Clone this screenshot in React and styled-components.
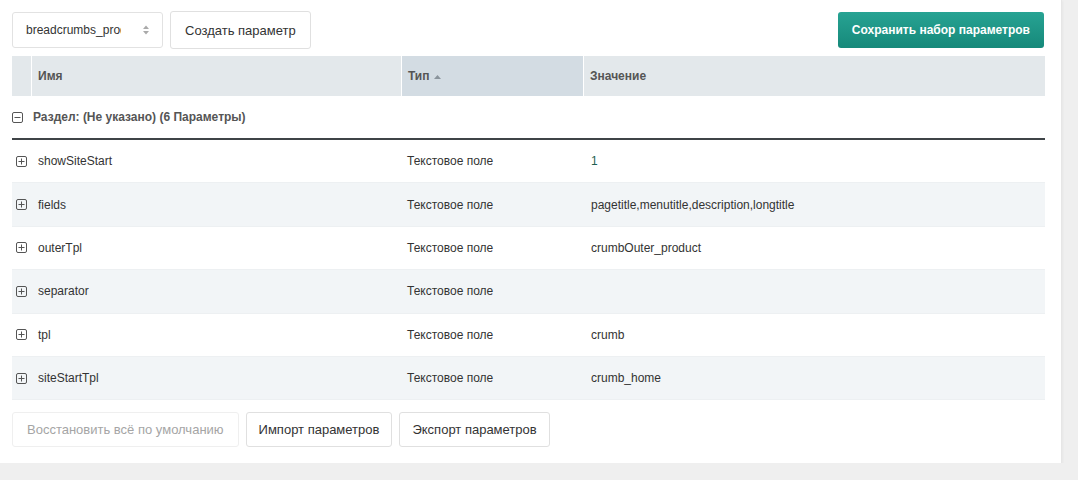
import React from "react";
import styled, { createGlobalStyle } from "styled-components";

const GlobalStyle = createGlobalStyle`
  html, body {
    margin: 0;
    padding: 0;
    background: #efefef;
    font-family: "Liberation Sans", Arial, sans-serif;
  }
`;

const params = [
  { name: "showSiteStart", type: "Текстовое поле", value: "1", numeric: true },
  { name: "fields", type: "Текстовое поле", value: "pagetitle,menutitle,description,longtitle" },
  { name: "outerTpl", type: "Текстовое поле", value: "crumbOuter_product" },
  { name: "separator", type: "Текстовое поле", value: "" },
  { name: "tpl", type: "Текстовое поле", value: "crumb" },
  { name: "siteStartTpl", type: "Текстовое поле", value: "crumb_home" },
];

const BoxIcon = ({ plus }) => (
  <svg width="11" height="11" viewBox="0 0 11 11">
    <rect x="0.5" y="0.5" width="10" height="10" rx="1.5" fill="none" stroke="#555" />
    <line x1="2.5" y1="5.5" x2="8.5" y2="5.5" stroke="#555" />
    {plus && <line x1="5.5" y1="2.5" x2="5.5" y2="8.5" stroke="#555" />}
  </svg>
);

export default function App() {
  return (
    <>
      <GlobalStyle />
      <Panel>
        <Toolbar>
          <Select>
            <SelectText>breadcrumbs_product</SelectText>
            <SelectArrows>
              <svg width="8" height="12" viewBox="0 0 8 12">
                <path d="M1 5 L4 1.5 L7 5 Z" fill="#aaa" />
                <path d="M1 7 L4 10.5 L7 7 Z" fill="#aaa" />
              </svg>
            </SelectArrows>
          </Select>
          <Button $tall>Создать параметр</Button>
          <Spacer />
          <SaveButton>Сохранить набор параметров</SaveButton>
        </Toolbar>

        <Table>
          <HeadRow>
            <HeadCell />
            <HeadCell>Имя</HeadCell>
            <HeadCell $sorted>
              Тип
              <SortArrow>
                <svg width="7" height="4" viewBox="0 0 7 4">
                  <path d="M0 4 L3.5 0 L7 4 Z" fill="#8a949c" />
                </svg>
              </SortArrow>
            </HeadCell>
            <HeadCell>Значение</HeadCell>
          </HeadRow>

          <GroupRow>
            <BoxIcon />
            <GroupTitle>Раздел: (Не указано) (6 Параметры)</GroupTitle>
          </GroupRow>

          {params.map((p, i) => (
            <Row key={p.name} $alt={i % 2 === 1}>
              <ExpandCell>
                <BoxIcon plus />
              </ExpandCell>
              <Cell>{p.name}</Cell>
              <Cell>{p.type}</Cell>
              <Cell $numeric={p.numeric}>{p.value}</Cell>
            </Row>
          ))}
        </Table>

        <Footer>
          <Button disabled>Восстановить всё по умолчанию</Button>
          <Button>Импорт параметров</Button>
          <Button>Экспорт параметров</Button>
        </Footer>
      </Panel>
    </>
  );
}

const Panel = styled.div`
  width: 1062px;
  box-sizing: border-box;
  background: #fff;
  padding: 11px 17px 16px 12px;
  border-right: 1px solid #e6e6e6;
  box-shadow: 1px 1px 2px rgba(0, 0, 0, 0.04);
`;

const Toolbar = styled.div`
  display: flex;
  align-items: center;
  gap: 7px;
  height: 38px;
  margin-bottom: 7px;
`;

const Spacer = styled.div`
  flex: 1;
`;

const Select = styled.div`
  width: 151px;
  height: 36px;
  box-sizing: border-box;
  border: 1px solid #e2e2e2;
  border-radius: 3px;
  display: flex;
  align-items: center;
  padding: 0 12px 0 13px;
  font-size: 12px;
  color: #333;
`;

const SelectText = styled.span`
  width: 95px;
  overflow: hidden;
  white-space: nowrap;
`;

const SelectArrows = styled.span`
  margin-left: auto;
  display: flex;
`;

const Button = styled.button`
  height: ${(p) => (p.$tall ? "38px" : "35px")};
  box-sizing: border-box;
  padding: 0 ${(p) => (p.$tall || p.disabled ? "14px" : "12px")};
  background: #fff;
  border: 1px solid ${(p) => (p.disabled ? "#efefef" : "#e0e0e0")};
  border-radius: 3px;
  font-family: "Liberation Sans", Arial, sans-serif;
  font-size: 13px;
  color: ${(p) => (p.disabled ? "#a5a5a5" : "#333")};
`;

const SaveButton = styled.button`
  height: 36px;
  padding: 0 14px;
  border: none;
  border-radius: 3px;
  background: linear-gradient(#27a393, #16897a);
  color: #fff;
  font-family: "Liberation Sans", Arial, sans-serif;
  font-size: 12px;
  font-weight: bold;
`;

const Table = styled.div`
  width: 1033px;
`;

const columns = `19px 370px 182px 1fr`;

const HeadRow = styled.div`
  display: grid;
  grid-template-columns: ${columns};
  height: 40px;
  background: #e3e8eb;
`;

const HeadCell = styled.div`
  display: flex;
  align-items: center;
  padding-left: 6px;
  font-size: 12px;
  font-weight: bold;
  color: #555;
  background: ${(p) => (p.$sorted ? "#d3dce3" : "transparent")};
  & + & {
    border-left: 1px solid #fff;
  }
  &:first-child {
    padding-left: 0;
  }
`;

const SortArrow = styled.span`
  display: flex;
  margin-left: 4px;
  margin-top: 1px;
`;

const GroupRow = styled.div`
  height: 42px;
  display: flex;
  align-items: center;
  gap: 10px;
  border-bottom: 2px solid #3f4447;
`;

const GroupTitle = styled.span`
  font-size: 12px;
  font-weight: bold;
  color: #555;
`;

const Row = styled.div`
  display: grid;
  grid-template-columns: ${columns};
  height: 43.4px;
  box-sizing: border-box;
  border-bottom: 1px solid #edf0f2;
  background: ${(p) => (p.$alt ? "#f2f5f7" : "#fff")};
`;

const ExpandCell = styled.div`
  display: flex;
  align-items: center;
  padding-left: 4px;
`;

const Cell = styled.div`
  display: flex;
  align-items: center;
  padding-left: 7px;
  font-size: 12px;
  color: ${(p) => (p.$numeric ? "#1f5f52" : "#333")};
  white-space: nowrap;
  &:nth-child(3) {
    padding-left: 6px;
  }
  &:nth-child(4) {
    padding-left: 8px;
  }
`;

const Footer = styled.div`
  display: flex;
  align-items: center;
  gap: 7px;
  margin-top: 12px;
`;
